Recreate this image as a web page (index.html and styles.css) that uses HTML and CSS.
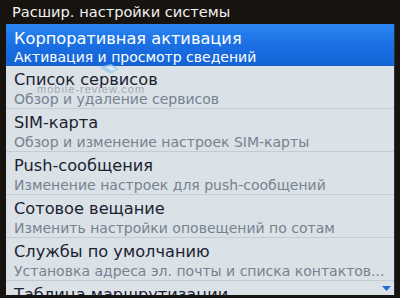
FILE: index.html
```html
<!DOCTYPE html>
<html lang="ru">
<head>
<meta charset="utf-8">
<link rel="stylesheet" href="styles.css">
</head>
<body>
<div class="screen">
  <div class="header">Расшир. настройки системы</div>
  <div class="panel">
    <div class="row selected">
      <div class="title">Корпоративная активация</div>
      <div class="sub">Активация и просмотр сведений</div>
    </div>
    <div class="row">
      <div class="title">Список сервисов</div>
      <div class="sub">Обзор и удаление сервисов</div>
    </div>
    <div class="row">
      <div class="title">SIM-карта</div>
      <div class="sub">Обзор и изменение настроек SIM-карты</div>
    </div>
    <div class="row">
      <div class="title">Push-сообщения</div>
      <div class="sub">Изменение настроек для push-сообщений</div>
    </div>
    <div class="row">
      <div class="title">Сотовое вещание</div>
      <div class="sub">Изменить настройки оповещений по сотам</div>
    </div>
    <div class="row">
      <div class="title">Службы по умолчанию</div>
      <div class="sub">Установка адреса эл. почты и списка контактов...</div>
    </div>
    <div class="row">
      <div class="title">Таблица маршрутизации</div>
    </div>
    <svg class="arrow" width="9" height="5" viewBox="0 0 9 5"><polygon points="0,0 9,0 4.5,5" fill="#1f6fd6"/></svg>
    <svg class="cursor" width="22" height="12" viewBox="0 0 22 12"><polygon points="1,4 12,11 21,6 13,1" fill="#9cc8ee" opacity="0.8"/><polygon points="8,4 14,8 18,6 13,3" fill="#e6f2fb" opacity="0.8"/></svg>
    <div class="watermark">mobile-review.com</div>
  </div>
</div>
</body>
</html>
```
FILE: styles.css
```css
html, body {
  margin: 0;
  padding: 0;
  background: #17130f;
}
.screen {
  width: 400px;
  height: 298px;
  overflow: hidden;
  font-family: "DejaVu Sans", sans-serif;
}
.header {
  height: 24px;
  padding-left: 12px;
  color: #f2f2f2;
  font-size: 14.6px;
  line-height: 24px;
}
.panel {
  position: relative;
  margin: 0 5px 0 6px;
  height: 271px;
  background: #dae1e7;
  border-right: 1px solid #26314a;
  overflow: hidden;
}
.row {
  height: 42px;
  border-bottom: 1px solid #c4ccd3;
  padding-left: 8px;
  white-space: nowrap;
}
.row .title {
  color: #1b2331;
  font-size: 16.2px;
  line-height: 20px;
  padding-top: 4px;
}
.row .sub {
  color: #76838f;
  font-size: 14px;
  line-height: 18px;
}
.row.selected {
  height: 41px;
  background: linear-gradient(#2a86f2, #1a6ee2 55%, #1465d6);
  border-bottom: 1px solid #1a5fc4;
}
.row.selected .title,
.row.selected .sub {
  color: #ffffff;
}
.row.selected .title {
  padding-top: 4px;
  line-height: 21px;
}
.row.selected .sub {
  line-height: 16px;
}
.arrow {
  position: absolute;
  right: 3px;
  bottom: 4px;
}
.cursor {
  position: absolute;
  left: 92px;
  top: 39px;
}
.watermark {
  position: absolute;
  left: 31px;
  top: 59px;
  font-family: "Liberation Sans", sans-serif;
  font-size: 11px;
  letter-spacing: 1px;
  color: rgba(140, 150, 162, 0.75);
}
```
